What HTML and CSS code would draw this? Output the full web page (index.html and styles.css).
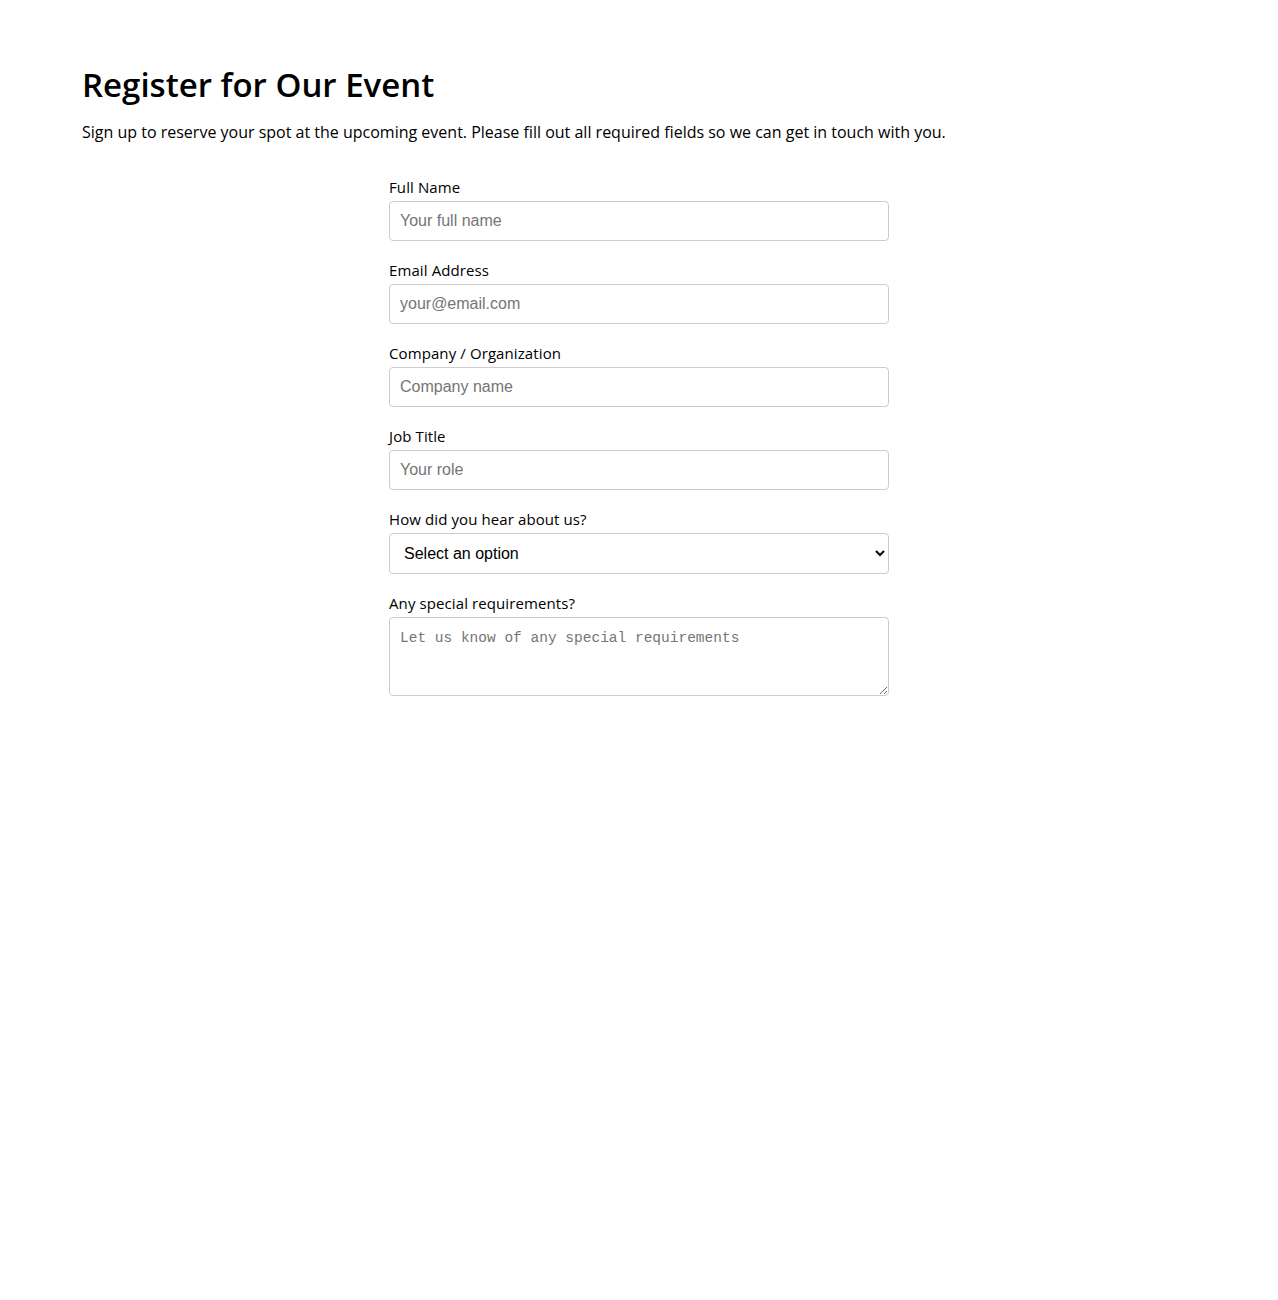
FILE: index.html
```html
<!DOCTYPE html>
<html lang="en">
<head>
    <meta charset="UTF-8">
    <meta name="viewport" content="width=device-width, initial-scale=1.0">
    <title>Register for Our Event</title>
    <link rel="stylesheet" href="styles.css">
</head>
<body>
    <div class="page">
        <h1>Register for Our Event</h1>
        <p class="intro">Sign up to reserve your spot at the upcoming event. Please fill out all required fields so we can get in touch with you.</p>

        <form class="register-form">
            <div class="field">
                <label for="name">Full Name</label>
                <input type="text" id="name" placeholder="Your full name">
            </div>
            <div class="field">
                <label for="email">Email Address</label>
                <input type="email" id="email" placeholder="your@email.com">
            </div>
            <div class="field">
                <label for="company">Company / Organization</label>
                <input type="text" id="company" placeholder="Company name">
            </div>
            <div class="field">
                <label for="title">Job Title</label>
                <input type="text" id="title" placeholder="Your role">
            </div>
            <div class="field">
                <label for="source">How did you hear about us?</label>
                <select id="source">
                    <option>Select an option</option>
                    <option>Social media</option>
                    <option>Friend or colleague</option>
                    <option>Search engine</option>
                    <option>Other</option>
                </select>
            </div>
            <div class="field">
                <label for="notes">Any special requirements?</label>
                <textarea id="notes" placeholder="Let us know of any special requirements"></textarea>
            </div>
        </form>
    </div>
</body>
</html>
```

FILE: styles.css
```css
* {
    box-sizing: border-box;
}

body {
    margin: 0;
    font-family: 'Open Sans', 'Noto Sans', Arial, sans-serif;
    color: #000;
    background: #fff;
}

.page {
    padding: 64px 82px;
}

h1 {
    margin: 0 0 14px;
    font-size: 33px;
    line-height: 42px;
    font-weight: 600;
}

.intro {
    margin: 0 0 33px;
    font-size: 16px;
    line-height: 24px;
}

.register-form {
    max-width: 500px;
    margin: 0 auto;
}

.field {
    margin-bottom: 19px;
}

.field label {
    display: block;
    margin-bottom: 4px;
    font-size: 15px;
    line-height: 20px;
    letter-spacing: 0.1px;
}

.field input,
.field select,
.field textarea {
    display: block;
    width: 100%;
    border: 1px solid #ccc;
    border-radius: 4px;
    background: #fff;
    color: #000;
}

.field input {
    height: 40px;
    padding: 0 10px;
    font-family: 'Liberation Sans', Arial, sans-serif;
    font-size: 16px;
}

.field input::placeholder {
    color: #757575;
}

.field select {
    height: 41px;
    padding: 0 6px 0 10px;
    font-family: 'Liberation Sans', Arial, sans-serif;
    font-size: 16px;
}

.field textarea {
    height: 79px;
    padding: 12px 10px 10px;
    font-family: 'Liberation Mono', 'DejaVu Sans Mono', monospace;
    font-size: 14.5px;
    resize: vertical;
}

.field textarea::placeholder {
    color: #757575;
}
```
